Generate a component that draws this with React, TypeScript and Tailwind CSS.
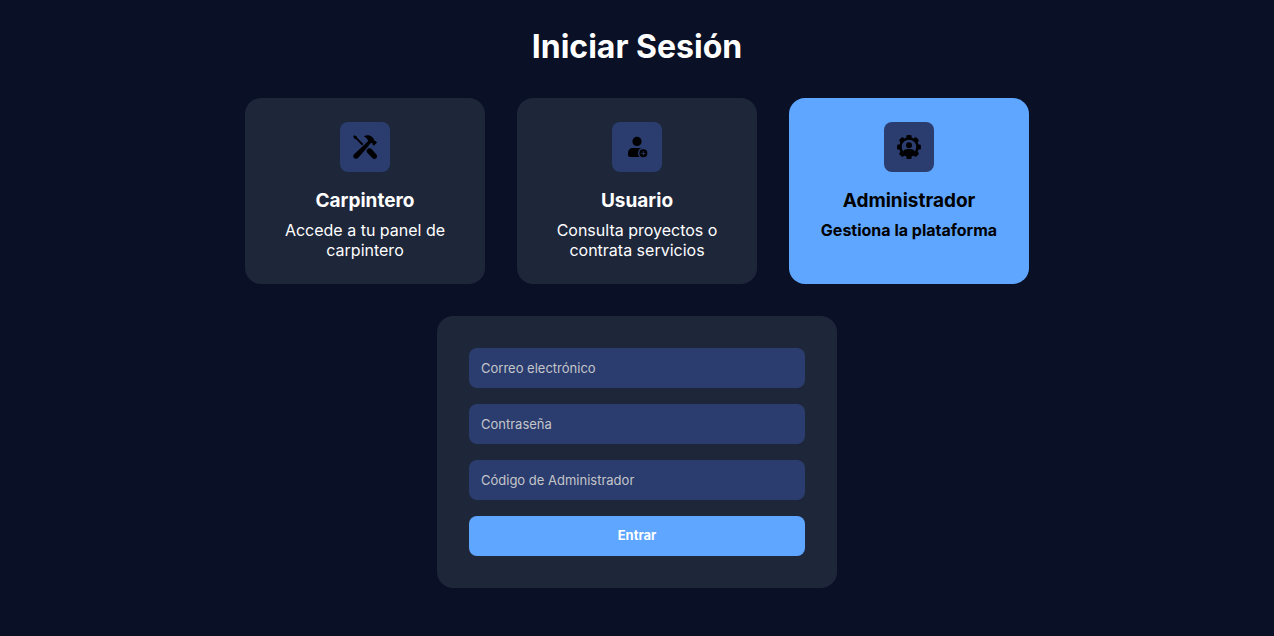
import React, { useState } from "react";

type Role = "carpintero" | "usuario" | "administrador";

function ToolsIcon() {
  return (
    <svg viewBox="0 0 24 24" className="size-6" fill="currentColor" aria-hidden="true">
      <path d="M0.2 1.3 1.4 0.2 3.8 1.5 4.3 3.1 10.4 9.1 9.1 10.4 3.1 4.3 1.5 3.8Z" />
      <path d="M10.8 1.4C13.6-.3 17.1.1 19.3 2.2L20.7 3.7C21.2 4.2 21 5 21.2 5.6 21.7 6.2 22.3 6 22.8 6.2L24 7.4 20.9 10.8 19.6 9.6C19.3 9 19.6 8.6 19.1 8.1 18.4 7.8 17.8 8.4 17.3 8.5L13.6 13.2 5.2 22.7C4 24 2.2 24.1 1.1 23 -.1 21.9 0 20.2 1.3 18.9L8.7 12.3 15 6.3C15 4.2 13.5 2.3 10.8 1.4Z" />
      <path d="M13.4 15.4 15.6 12.9 18.3 13.7 23.2 19.2C24.3 20.5 24.3 22.1 23.3 23.2 22.3 24.2 20.6 24.2 19.4 23.1L14.2 17.8Z" />
    </svg>
  );
}

function UserAddIcon() {
  return (
    <svg viewBox="0 0 24 24" className="size-6" fill="currentColor" aria-hidden="true">
      <circle cx="12" cy="6.4" r="4.6" />
      <path d="M8 13h8.2a5.6 5.6 0 0 0-1.7 9H5.4C3.8 22 3 21.2 3 19.8v-1.6C3 15 5 13 8 13Z" />
      <path
        fillRule="evenodd"
        d="M18.3 14.3a4 4 0 1 1 0 8 4 4 0 0 1 0-8Zm-.4 1.8v1.8h-1.8v.8h1.8v1.8h.8v-1.8h1.8v-.8h-1.8v-1.8Z"
      />
    </svg>
  );
}

const teeth = [0, 45, 90, 135, 180, 225, 270, 315];

function AdminIcon() {
  return (
    <svg viewBox="0 0 24 24" className="size-6" fill="currentColor" aria-hidden="true">
      {teeth.map((angle) => (
        <rect key={angle} x="9.4" y="0.1" width="5.2" height="4" rx="1.2" transform={`rotate(${angle} 12 12)`} />
      ))}
      <path
        fillRule="evenodd"
        d="M12 2.2a9.8 9.8 0 1 1 0 19.6 9.8 9.8 0 0 1 0-19.6ZM6.3 16.5C7 14.8 8.8 14.1 12 14.1s5 .7 5.7 2.4A7.3 7.3 0 1 0 6.3 16.5Z"
      />
      <circle cx="12" cy="10.2" r="3" />
    </svg>
  );
}

const roles: { id: Role; title: string; text: string; icon: React.ReactNode }[] = [
  { id: "carpintero", title: "Carpintero", text: "Accede a tu panel de carpintero", icon: <ToolsIcon /> },
  { id: "usuario", title: "Usuario", text: "Consulta proyectos o contrata servicios", icon: <UserAddIcon /> },
  { id: "administrador", title: "Administrador", text: "Gestiona la plataforma", icon: <AdminIcon /> },
];

function Field({ id, type, label }: { id: string; type: string; label: string }) {
  return (
    <input
      id={id}
      name={id}
      type={type}
      aria-label={label}
      placeholder={label}
      className="block h-10 w-full rounded-lg bg-[#2b3c6e] px-3 text-[13px] text-white outline-none placeholder:text-[#c4c6ca] focus-visible:ring-2 focus-visible:ring-[#5ea6ff]"
    />
  );
}

export default function App() {
  const [role, setRole] = useState<Role>("administrador");

  return (
    <main className="flex min-h-screen flex-col items-center gap-8 bg-[#0a1025] px-4 pt-7 pb-12 font-['Inter',sans-serif] text-white">
      <h1 className="text-[32px] leading-[38px] font-bold">Iniciar Sesión</h1>

      <div className="flex flex-wrap items-stretch justify-center gap-8">
        {roles.map((item) => {
          const active = item.id === role;
          return (
            <button
              key={item.id}
              type="button"
              aria-pressed={active}
              onClick={() => setRole(item.id)}
              className={`flex w-60 cursor-pointer flex-col items-center rounded-2xl p-6 text-center ${
                active ? "bg-[#5ea6ff] text-black" : "bg-[#1e263a] text-white"
              }`}
            >
              <span className="mb-4 flex size-[50px] items-center justify-center rounded-lg bg-[#2b3c6e] text-black">
                {item.icon}
              </span>
              <span className="mb-1.5 text-[19px] leading-[26px] font-bold">{item.title}</span>
              <span className={`text-base leading-5 ${active ? "font-bold" : "font-normal"}`}>{item.text}</span>
            </button>
          );
        })}
      </div>

      <form
        onSubmit={(event) => event.preventDefault()}
        className="flex w-full max-w-[400px] flex-col gap-4 rounded-2xl bg-[#1e263a] p-8"
      >
        <Field id="correo" type="email" label="Correo electrónico" />
        <Field id="contrasena" type="password" label="Contraseña" />
        {role === "administrador" && <Field id="codigo" type="text" label="Código de Administrador" />}
        <button type="submit" className="h-10 cursor-pointer rounded-lg bg-[#5ea6ff] text-[13px] font-bold text-white">
          Entrar
        </button>
      </form>
    </main>
  );
}
